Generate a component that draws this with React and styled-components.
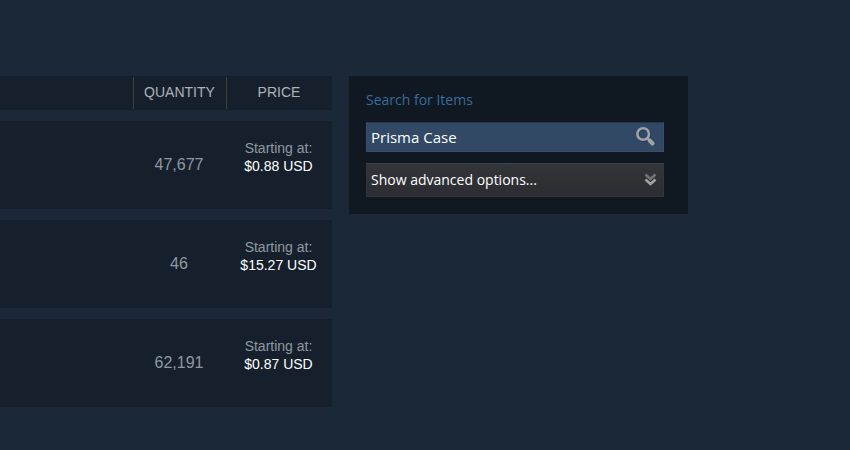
import React from 'react';
import styled, { createGlobalStyle } from 'styled-components';

const GlobalStyle = createGlobalStyle`
  * {
    box-sizing: border-box;
  }

  body {
    margin: 0;
    background-color: #1b2838;
    color: #8f98a0;
    font-family: "Liberation Sans", Arial, sans-serif;
    font-size: 14px;
  }
`;

const Page = styled.main`
  display: flex;
  align-items: flex-start;
  gap: 17px;
  padding: 65px 162px 32px 0;
`;

const Listings = styled.table`
  flex: 1;
  min-width: 0;
  table-layout: fixed;
  border-collapse: separate;
  border-spacing: 0 11px;
  text-align: center;
`;

const Col = styled.col`
  width: ${props => props.$width}px;
`;

const HeaderCell = styled.th`
  height: 34px;
  padding: 1px 0;
  background-color: #16202d;
  color: #acb2b8;
  font-weight: 400;
`;

const HeaderLabel = styled.span`
  display: block;
  height: 32px;
  padding-right: 1px;
  border-left: 1px solid #404040;
  line-height: 30px;
`;

const Cell = styled.td`
  height: 88px;
  padding: 0 1px 0 0;
  background-color: #16202d;
`;

const Quantity = styled.span`
  font-size: 16px;
`;

const Price = styled.div`
  padding-bottom: 16px;
  line-height: 18px;
`;

const Amount = styled.div`
  color: #ffffff;
`;

const Panel = styled.form`
  width: 339px;
  margin-top: 11px;
  padding: 15px 24px 17px 17px;
  background-color: #101822;
  font-family: "Open Sans", sans-serif;
`;

const PanelTitle = styled.label`
  display: block;
  margin-bottom: 13px;
  color: #366d9a;
  line-height: 18px;
`;

const SearchBox = styled.div`
  display: flex;
  height: 30px;
  margin-bottom: 11px;
  border: 1px solid #3b4f63;
  border-top-color: #223650;
  background-color: #324965;
`;

const SearchInput = styled.input`
  flex: 1;
  min-width: 0;
  padding: 0 4px;
  border: 0;
  outline: 0;
  background: none;
  color: #ffffff;
  font: inherit;
  font-size: 15px;
`;

const SearchButton = styled.button`
  display: flex;
  align-items: center;
  justify-content: center;
  width: 34px;
  padding: 0;
  border: 0;
  background: none;
  cursor: pointer;
`;

const AdvancedButton = styled.button`
  display: flex;
  align-items: center;
  justify-content: space-between;
  width: 100%;
  height: 34px;
  padding: 0 6px 2px 4px;
  border: 1px solid #333539;
  border-top-color: #404346;
  background: linear-gradient(to bottom, #333539, #2b2d32);
  color: #ffffff;
  font: inherit;
  cursor: pointer;
`;

const SearchIcon = () => (
  <svg width="22" height="22" viewBox="0 0 22 22" fill="none" aria-hidden="true">
    <g stroke="#1d2b3d" opacity="0.6">
      <circle cx="9" cy="8.8" r="5.8" strokeWidth="2.6" />
      <path d="M15.2 15l3 3" strokeWidth="4.4" strokeLinecap="round" />
    </g>
    <circle cx="8.2" cy="8" r="5.8" stroke="#a0a3a7" strokeWidth="2.6" />
    <path d="M12.2 12l2 2" stroke="#a0a3a7" strokeWidth="2" />
    <path d="M14.6 14.4l3 3" stroke="#a0a3a7" strokeWidth="4.2" strokeLinecap="round" />
  </svg>
);

const ChevronsIcon = () => (
  <svg width="13" height="13" viewBox="0 0 13 13" fill="none" aria-hidden="true">
    <path d="M1.5 1.5l5 4.5 5-4.5" stroke="#717377" strokeWidth="2.6" />
    <path d="M1.5 6.5l5 4.5 5-4.5" stroke="#a0a3a6" strokeWidth="2.6" />
  </svg>
);

const items = [
  { id: 1, quantity: 47677, price: '$0.88 USD' },
  { id: 2, quantity: 46, price: '$15.27 USD' },
  { id: 3, quantity: 62191, price: '$0.87 USD' },
];

const ListingRow = (props) => (
  <tr>
    <Cell />
    <Cell>
      <Quantity>{props.quantity.toLocaleString('en-US')}</Quantity>
    </Cell>
    <Cell>
      <Price>
        Starting at:
        <Amount>{props.price}</Amount>
      </Price>
    </Cell>
  </tr>
);

const App = () => (
  <>
    <GlobalStyle />
    <Page>
      <Listings>
        <colgroup>
          <col />
          <Col $width={93} />
          <Col $width={106} />
        </colgroup>
        <thead>
          <tr>
            <HeaderCell as="td" />
            <HeaderCell scope="col"><HeaderLabel>QUANTITY</HeaderLabel></HeaderCell>
            <HeaderCell scope="col"><HeaderLabel>PRICE</HeaderLabel></HeaderCell>
          </tr>
        </thead>
        <tbody>
          {items.map(item => (
            <ListingRow key={item.id} quantity={item.quantity} price={item.price} />
          ))}
        </tbody>
      </Listings>
      <Panel onSubmit={e => e.preventDefault()}>
        <PanelTitle htmlFor="item-search">Search for Items</PanelTitle>
        <SearchBox>
          <SearchInput id="item-search" type="text" defaultValue="Prisma Case" />
          <SearchButton type="submit" aria-label="Search">
            <SearchIcon />
          </SearchButton>
        </SearchBox>
        <AdvancedButton type="button">
          Show advanced options...
          <ChevronsIcon />
        </AdvancedButton>
      </Panel>
    </Page>
  </>
);

export default App;
